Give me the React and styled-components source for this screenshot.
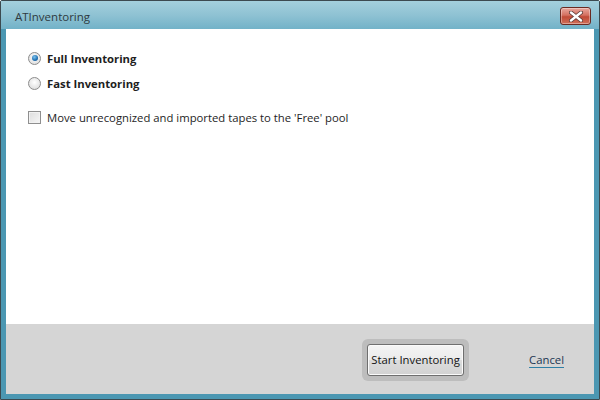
import React, { useState } from 'react';
import styled, { createGlobalStyle } from 'styled-components';

const GlobalStyle = createGlobalStyle`
  html, body {
    margin: 0;
    padding: 0;
    background: #ffffff;
  }
  body {
    font-family: "Open Sans", "Noto Sans", "Liberation Sans", sans-serif;
  }
`;

const Window = styled.div`
  width: 600px;
  height: 400px;
  box-sizing: border-box;
  border: 1px solid #3c4a50;
  background: #4b97b2;
  display: flex;
  flex-direction: column;
  border-radius: 2px 2px 0 0;
`;

const TitleBar = styled.div`
  height: 28px;
  display: flex;
  align-items: center;
  justify-content: space-between;
  padding: 0 8px 0 14px;
  background: linear-gradient(#a4d0dd, #8fc2d3 50%, #72b2c8);
`;

const Title = styled.span`
  font-size: 11.5px;
  color: #2e3a40;
  padding-top: 2px;
`;

const CloseButton = styled.button`
  width: 31px;
  height: 18px;
  margin-top: 2px;
  padding: 0;
  border: 1px solid #6a2a22;
  border-radius: 3px;
  background: linear-gradient(#e8a89e, #d47060 45%, #c04a36 55%, #d0705a);
  box-shadow: inset 0 0 0 1px rgba(255, 255, 255, 0.35);
  display: flex;
  align-items: center;
  justify-content: center;
`;

const Body = styled.div`
  flex: 1;
  margin: 0 5px 5px 5px;
  display: flex;
  flex-direction: column;
  background: #ffffff;
`;

const Options = styled.div`
  flex: 1;
  padding: 22px 0 0 22px;
  display: flex;
  flex-direction: column;
`;

const Row = styled.label`
  display: flex;
  align-items: center;
  gap: 6px;
  height: 14px;
  margin-bottom: ${(p) => p.$gap || 11}px;
  font-size: 11.3px;
  font-weight: ${(p) => (p.$bold ? 700 : 400)};
  color: #1e1e1e;
`;

const Radio = styled.span`
  width: 11px;
  height: 11px;
  border-radius: 50%;
  border: 1px solid #8c8c8c;
  background: radial-gradient(circle at 50% 40%, #ffffff, #d6d6d6);
  display: flex;
  align-items: center;
  justify-content: center;
  &::after {
    content: '';
    display: ${(p) => (p.$checked ? 'block' : 'none')};
    width: 6px;
    height: 6px;
    border-radius: 50%;
    background: radial-gradient(circle at 40% 35%, #7cc4f0, #1f6fb0 60%, #0f4c86);
  }
`;

const Check = styled.span`
  width: 11px;
  height: 11px;
  border: 1px solid #8f8f8f;
  background: linear-gradient(135deg, #dedede, #f6f6f6);
  box-shadow: inset 0 0 0 1px #f2f2f2;
`;

const Footer = styled.div`
  height: 70px;
  background: #d5d5d5;
  display: flex;
  align-items: center;
  justify-content: flex-end;
  padding: 0 30px 0 0;
  gap: 60px;
`;

const Halo = styled.div`
  padding: 5px;
  border-radius: 6px;
  background: #bdbdbd;
  margin-top: 1px;
`;

const Button = styled.button`
  width: 97px;
  height: 32px;
  padding: 0;
  font-family: inherit;
  font-size: 11.3px;
  color: #111;
  border: 1px solid #6f6f6f;
  border-radius: 3px;
  background: linear-gradient(#f4f4f4, #ebebeb 50%, #dcdcdc 51%, #d2d2d2);
  box-shadow: inset 0 0 0 1px #fafafa;
`;

const CancelLink = styled.a`
  font-size: 11.3px;
  color: #1c3552;
  text-decoration: underline;
  text-decoration-color: #2f7fa6;
  text-underline-offset: 3px;
  cursor: pointer;
`;

export default function App() {
  const [mode, setMode] = useState('full');
  return (
    <>
      <GlobalStyle />
      <Window>
        <TitleBar>
          <Title>ATInventoring</Title>
          <CloseButton>
            <svg width="14" height="11" viewBox="0 0 14 11">
              <path
                d="M2 1.5 L12 9.5 M12 1.5 L2 9.5"
                stroke="#5a3a36"
                strokeWidth="4"
                strokeLinecap="round"
              />
              <path
                d="M2 1.5 L12 9.5 M12 1.5 L2 9.5"
                stroke="#ffffff"
                strokeWidth="2.4"
                strokeLinecap="round"
              />
            </svg>
          </CloseButton>
        </TitleBar>
        <Body>
          <Options>
            <Row $bold onClick={() => setMode('full')}>
              <Radio $checked={mode === 'full'} />
              Full Inventoring
            </Row>
            <Row $bold $gap={20} onClick={() => setMode('fast')}>
              <Radio $checked={mode === 'fast'} />
              Fast Inventoring
            </Row>
            <Row>
              <Check />
              Move unrecognized and imported tapes to the 'Free' pool
            </Row>
          </Options>
          <Footer>
            <Halo>
              <Button>Start Inventoring</Button>
            </Halo>
            <CancelLink>Cancel</CancelLink>
          </Footer>
        </Body>
      </Window>
    </>
  );
}
